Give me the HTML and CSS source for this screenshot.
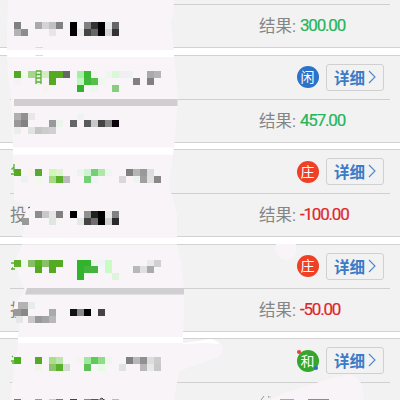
FILE: index.html
```html
<!DOCTYPE html>
<html lang="zh">
<head>
<meta charset="utf-8">
<title>记录</title>
<link rel="stylesheet" href="styles.css">
</head>
<body>
<main class="list">
  <section class="card">
    <div class="head"></div>
    <div class="body"><span class="bet"></span><span class="label">结果:</span><span class="num win">300.00</span></div>
  </section>
  <section class="card">
    <div class="head"><span class="badge blue">闲</span><span class="detail">详细<svg class="chev" viewBox="0 0 8 14"><path d="M1 1L7 7L1 13"/></svg></span></div>
    <div class="body"><span class="bet"></span><span class="label">结果:</span><span class="num win">457.00</span></div>
  </section>
  <section class="card">
    <div class="head"><span class="badge red">庄</span><span class="detail">详细<svg class="chev" viewBox="0 0 8 14"><path d="M1 1L7 7L1 13"/></svg></span></div>
    <div class="body"><span class="bet">投</span><span class="label">结果:</span><span class="num loss">-100.00</span></div>
  </section>
  <section class="card">
    <div class="head"><span class="badge red">庄</span><span class="detail">详细<svg class="chev" viewBox="0 0 8 14"><path d="M1 1L7 7L1 13"/></svg></span></div>
    <div class="body"><span class="bet">投</span><span class="label">结果:</span><span class="num loss">-50.00</span></div>
  </section>
  <section class="card">
    <div class="head"><span class="badge green">和</span><span class="detail">详细<svg class="chev" viewBox="0 0 8 14"><path d="M1 1L7 7L1 13"/></svg></span></div>
    <div class="body"></div>
  </section>
</main>
<svg class="cover" viewBox="0 0 400 400">
  <g class="paint">
    <path d="M8 0H173.500L174 12L171 23L174 50H7V30Z"/>
    <path d="M7 57H174L176 72L178 98L177 115L174 148H13L12 126L11 100L8 75Z"/>
    <path d="M13 154H173L171 172L169 188L173 198L177 214L177 238H22L25 222L26 206L14 200V188Z"/>
    <path d="M22 245H177L181 260L184 288V315L183 337H18L20 322L13 309L15 303L25 290L19 278L15 259Z"/>
    <path d="M18 343H183L205 341Q218 338 223 347Q222 356 216 358L179 371L174 400H10L14 368Z"/>
    <path d="M276 244H296V252Q295 260 286 260Q277 259 275 249Z"/>
    <path d="M271 400L281 394L332 378L350 374Q358 376 362 385L364 400Z"/>
  </g>
  <path class="gap" d="M7 50H174V57H7ZM13 147.500H174L173 154.500H13ZM22 238H177V244.500H22ZM18 337H183V343H18ZM183 343L205 340Q213 337 220 344L205 343L183 344Z"/>
  <path class="bar" d="M14 99H177.500V106H14ZM27 288H184V294.500H25Z"/>
  <path class="faint" d="M35.500 47.500H43M35.500 55.500H43"/>
  <g id="mosaic" shape-rendering="crispEdges"></g>
  <g class="scrap">
    <path d="M36 71H41V84M36 71V84M36 74.500H41M36 78H41M36 82H41"/>
    <path d="M14 164V172M14 167L11.500 169.500M11 174H16"/>
    <path d="M11 263H14M12 268H13M11 269H15"/>
    <path d="M12 356L13 357M11 361H14M12 363H15"/>
  </g>
  <path class="ink" d="M28 208L30 207M100 399L102 398L104 400"/>
  <path class="remnant" d="M264 396L261 400M268.500 396V397.500M270 396.500V397.500"/>
</svg>
<svg class="dots" viewBox="0 0 24 24"><circle cx="3" cy="4" r="2" fill="#e8402c"/><circle cx="20" cy="20" r="2" fill="#2b6ccc"/></svg>
<script src="mosaic.js"></script>
</body>
</html>
```
FILE: styles.css
```css
body {
  margin: 0;
  width: 400px;
  height: 400px;
  overflow: hidden;
  position: relative;
  background: #fff;
  font-family: Roboto, "Noto Sans CJK SC", sans-serif;
}
.list {
  display: flex;
  flex-direction: column;
  gap: 6.5px;
  height: 439.6px;
  overflow: hidden;
  margin-top: -39.6px;
}
.card {
  box-sizing: border-box;
  height: 88px;
  flex: none;
  background: #f2f2f2;
  border-top: 1px solid #d2d2d2;
  border-bottom: 1px solid #d2d2d2;
}
.card:last-child {
  height: 61.6px;
  border-bottom: 0;
}
.card:last-child .body { display: none; }
.head {
  box-sizing: border-box;
  height: 44px;
  margin: 0 10px;
  padding-right: 6px;
  border-bottom: 1px solid #d0d0d0;
  display: flex;
  align-items: center;
  justify-content: flex-end;
  gap: 7.5px;
}
.badge {
  width: 22px;
  height: 22px;
  border-radius: 50%;
  color: #fff;
  font: 14px/21px "Noto Sans CJK SC", sans-serif;
  text-align: center;
}
.blue { background: #2c72c8; }
.red { background: #ef4026; }
.green { background: #35a52e; }
.detail {
  box-sizing: border-box;
  width: 58px;
  height: 27px;
  border: 1px solid #d0d0d0;
  border-radius: 3px;
  padding: 0 7px 1px 7px;
  display: flex;
  align-items: center;
  justify-content: space-between;
  color: #3b7bc8;
  font: 700 15.5px/24px "Noto Sans CJK SC", sans-serif;
}
.chev {
  width: 8px;
  height: 14px;
  flex: none;
  fill: none;
  stroke: #4c86cb;
  stroke-width: 1.1;
}
.body {
  display: flex;
  align-items: center;
  height: 40px;
  padding-left: 10px;
  color: #858585;
  font-size: 16.5px;
}
.bet { width: 249px; flex: none; font-family: "Noto Sans CJK SC", sans-serif; }
.label { width: 41px; flex: none; white-space: nowrap; }
.num { font-size: 17px; letter-spacing: -1.2px; -webkit-text-stroke: 0.2px currentColor; }
.win { color: #27b45a; }
.loss { color: #e0262a; }
.cover {
  position: absolute;
  left: 0;
  top: 0;
  width: 400px;
  height: 400px;
}
.dots {
  position: absolute;
  left: 296px;
  top: 348px;
  width: 24px;
  height: 24px;
}
.paint { fill: #f8f4f8; }
.gap { fill: #fff; }
.bar { fill: #d0ced1; }
.faint { stroke: #dcdadc; }
.scrap { fill: none; stroke: #5cae38; stroke-width: 1.3; }
.ink { fill: none; stroke: #444; }
.remnant { fill: none; stroke: #999; }
```
FILE: mosaic.js
```js
// Each row: top edge, then column:colour cells on a 7px grid starting at x = 14.
const rows = [
  [22, "0:808080 3:aaaaaa 4:d5d3d6 5:c0c0c0 6:808080 8:000000 10:808080 11:333333 12:000000 13:e6e9ea 14:666666"],
  [29, "0:b3b3b3 1:8c8c8c 5:e8e4e8 8:0a000a 9:e8f0e8 10:444444 11:666666 12:000000 13:d5d3d6 14:333333"],
  [71, "0:4fac22 1:effbe9 2:a8d58e 3:eaf5e4 4:d4ebc4 5:55aa22 6:55aa22 7:666666 9:a0f29c 10:3cb834 11:f0f5ef 13:eff5ef 14:d8f8d8 15:f0eef0 16:eef2ee 19:aaaaaa 20:b5b5b5"],
  [78, "0:f4f2f4 3:eaf5e4 5:55aa22 9:c0f4c0 10:40b838 11:54c048 12:eff5ef 17:808080 19:808080"],
  [85, "4:f7f4ee 9:34b02c 11:eff5ef 14:88cc80"],
  [113, "0:b0b0b0 1:919191 2:e8e8e8 9:eef4ef"],
  [120, "0:999999 1:828282 5:999999 6:ecf4ee 8:666666 10:5a5a5a 11:c8c8c8 12:444444 13:888888 14:0a000a"],
  [127, "0:ededed 2:dde5dc 3:c5c5c5 4:cccccc 5:d0d0d0"],
  [169, "0:55aa22 2:f7f4ee 3:58a838 5:d0f8b4 6:dcf4d0 9:ebf4ed 10:d0f4d0 11:74d074 12:b0e8ac 13:eff5ef 16:808080 17:b5b5b5 18:999999 19:dddddd"],
  [176, "1:eef2f5 3:effbe9 5:a4dc84 6:5cb02c 7:bbbbbb 10:74d074 11:eef4f8 15:d8d8d8 17:f0f4f0 18:a0a0a0 19:e0e0e0 20:888888"],
  [211, "3:8c8c8c 4:c8c8c8 5:e5e5e5 6:808080 8:000000 10:909090 11:1c241c 12:000000 13:e8e8e8 14:808080"],
  [218, "1.1:999999 5:dfe5df 9:e5e8e5 10:444444 11:706c70 12:000000 13:d0d0d0 14:2a2a2a"],
  [260, "0:5cb02c 1:effbe9 2:88bc68 3:54b41c 4:88c068 5:54aa22 6:54aa22 9:30b42c 10:30b42c 11:eef5ef 12:f0f4f8 13:c8fcc4 19:eaeaea 20:d0d0d0"],
  [266, "3:54aa22 5:54aa22 9:30b42c 10:44b43c 11:44b43c 13:c8fcc4 17:b8b8b8 18:e0e0e0 19:aaaaaa"],
  [273, "9:30b42c 14:dff4df"],
  [302, "0.5:b3b3b3 1:b3b3b3 2:e8ede8"],
  [309, "0:999999 1:888888 5:aaaaaa 8:111111 9:888888 10:000000 12:444444"],
  [316, "0.3:e6e6e6 2:c8c8c8 3:999999 4:a4a4a4 5:b8b8b8"],
  [357, "0:48b018 3:54aa24 5:a8e088 6:c0e4b0 9:f5f5ee 10:a0e8a0 11:5ccc54 12:90dc88 13:eff5ef 16:808080 17:b8b8b8 18:909090 19:dddddd 20:cccccc"],
  [364, "3:eff5e9 5:8cc46c 6:58b02c 7:d4dcd4 10:60c058 12:e4fce4 15:e0e4e0 18:b8b8b8 19:e8e8e8 20:c8c8c8"],
  [399, "0:777777 3:999999 5:cccccc 6:777777 8:444444 10:888888 11:555555 12:999999 14:bbbbbb 38:aaaaaa 39:aaaaaa 42:7088ee 43:7088ee 44:7088ee"]
];
const layer = document.getElementById("mosaic");
for (const [y, cells] of rows) {
  for (const cell of cells.split(" ")) {
    const [col, color] = cell.split(":");
    const r = document.createElementNS("http://www.w3.org/2000/svg", "rect");
    r.setAttribute("x", 14 + 7 * Number(col));
    r.setAttribute("y", y);
    r.setAttribute("width", 7);
    r.setAttribute("height", 7);
    r.setAttribute("fill", "#" + color);
    layer.appendChild(r);
  }
}
```
